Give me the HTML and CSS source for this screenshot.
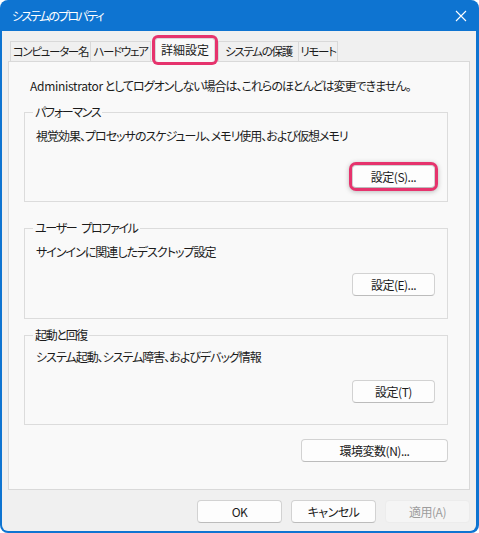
FILE: index.html
```html
<!DOCTYPE html>
<html lang="ja">
<head>
    <meta charset="UTF-8">
    <meta name="viewport" content="width=device-width, initial-scale=1.0">
    <title>システムのプロパティ</title>
    <link rel="stylesheet" href="styles.css">
</head>
<body>
    <div class="window">
        <div class="titlebar">
            <span class="title">システムのプロパティ</span>
            <svg class="close" width="12" height="12" viewBox="0 0 12 12">
                <path d="M1 1 L11 11 M11 1 L1 11" stroke="#fff" stroke-width="1.1" fill="none"/>
            </svg>
        </div>

        <div class="dialog">
            <div class="tabs">
                <div class="tab tab-name">コンピューター名</div>
                <div class="tab tab-hw">ハードウェア</div>
                <div class="tab active">詳細設定</div>
                <div class="tab tab-protect">システムの保護</div>
                <div class="tab tab-remote">リモート</div>
            </div>

            <div class="panel">
                <p class="note"><span class="latin">Administrator</span> としてログオンしない場合は、これらのほとんどは変更できません。</p>

                <fieldset class="group group-perf">
                    <legend>パフォーマンス</legend>
                    <p class="desc">視覚効果、プロセッサのスケジュール、メモリ使用、および仮想メモリ</p>
                    <div class="actions">
                        <button class="btn marked">設定(S)...</button>
                    </div>
                </fieldset>

                <fieldset class="group group-profile">
                    <legend>ユーザー&ensp;プロファイル</legend>
                    <p class="desc">サインインに関連したデスクトップ設定</p>
                    <div class="actions">
                        <button class="btn">設定(E)...</button>
                    </div>
                </fieldset>

                <fieldset class="group group-startup">
                    <legend>起動と回復</legend>
                    <p class="desc">システム起動、システム障害、およびデバッグ情報</p>
                    <div class="actions">
                        <button class="btn">設定(T)</button>
                    </div>
                </fieldset>

                <div class="env-row">
                    <button class="btn btn-wide">環境変数(N)...</button>
                </div>
            </div>

            <div class="footer">
                <button class="btn btn-footer">OK</button>
                <button class="btn btn-footer">キャンセル</button>
                <button class="btn btn-footer" disabled>適用(A)</button>
            </div>
        </div>
    </div>
</body>
</html>
```

FILE: styles.css
```css
body {
    margin: 0;
    background-color: #fff;
    font-family: "Noto Sans CJK JP", "Noto Sans", sans-serif;
    font-size: 12px;
    font-feature-settings: "palt";
    letter-spacing: -1px;
    color: #1b1b1b;
}
.latin {
    letter-spacing: -0.3px;
}
.window {
    width: 479px;
    height: 533px;
    box-sizing: border-box;
    background-color: #0e74d1;
    border-radius: 8px;
    padding: 0 3px 2px 2px;
    display: flex;
    flex-direction: column;
}
.titlebar {
    height: 31px;
    flex: none;
    display: flex;
    align-items: center;
    justify-content: space-between;
    padding: 0 9px 0 10px;
    color: #fff;
}
.title {
    line-height: 16px;
    letter-spacing: -1.8px;
}
.close {
    display: block;
}
.dialog {
    flex: 1;
    background-color: #f0f0f0;
    border-radius: 0 0 6px 6px;
    padding: 7px 6px 0 6px;
    display: flex;
    flex-direction: column;
}
.tabs {
    height: 23px;
    display: flex;
    align-items: flex-end;
    padding-left: 2px;
    position: relative;
    z-index: 1;
}
.tab {
    height: 20px;
    line-height: 19px;
    box-sizing: border-box;
    border: 1px solid #d9d9d9;
    border-bottom: none;
    margin-right: -1px;
    background-color: #f0f0f0;
    white-space: nowrap;
    text-align: center;
    font-size: 11.5px;
    letter-spacing: -1.3px;
}
.tab-name {
    width: 81px;
}
.tab-hw {
    width: 61px;
}
.tab-protect {
    width: 81px;
}
.tab-remote {
    width: 40px;
}
.tab.active {
    width: 60px;
    height: 24px;
    line-height: 22px;
    margin: 0 3px -1px 5px;
    background-color: #f9f9f9;
    border-radius: 3px;
    font-size: 12px;
    letter-spacing: 0;
    box-shadow: 0 0 0 3px #e6336d;
}
.panel {
    height: 429px;
    box-sizing: border-box;
    border: 1px solid #d9d9d9;
    background-color: #f9f9f9;
    padding: 16px 21px 0 15px;
}
.note {
    margin: 0 0 0 6px;
    line-height: 16px;
    white-space: nowrap;
}
.group {
    margin: 10px 0 0;
    padding: 0 12px 22px 11px;
    border: 1px solid #dcdcdc;
    min-inline-size: 0;
}
.group legend {
    margin-left: -3px;
    padding: 0 2px;
    line-height: 16px;
    letter-spacing: -1.3px;
}
.desc {
    margin: 8px 0 0;
    line-height: 16px;
    white-space: nowrap;
}
.actions {
    display: flex;
    justify-content: flex-end;
    margin-top: 13px;
}
.group-perf {
    padding-bottom: 13px;
}
.group-perf .actions {
    margin-top: 21px;
}
.group-profile {
    margin-top: 18px;
}
.group-startup {
    margin-top: 8px;
    padding-bottom: 21px;
}
.group-startup .desc {
    margin-top: 6px;
}
.group-startup .actions {
    margin-top: 15px;
}
.btn {
    width: 83px;
    height: 23px;
    padding: 0;
    box-sizing: border-box;
    border: 1px solid #d2d2d2;
    border-bottom-color: #bcbcbc;
    border-radius: 4px;
    background-color: #fdfdfd;
    font: inherit;
    font-feature-settings: "palt";
    letter-spacing: -0.5px;
    color: #1b1b1b;
}
.btn.marked {
    box-shadow: 0 0 0 3px #e6336d, 0 1px 5px 3px rgba(0, 0, 0, 0.25);
}
.env-row {
    display: flex;
    justify-content: flex-end;
    margin-top: 14px;
}
.btn-wide {
    width: 147px;
}
.footer {
    display: flex;
    justify-content: flex-end;
    gap: 9px;
    padding-top: 10px;
}
.btn-footer {
    width: 85px;
}
.btn-footer:disabled {
    background-color: #f5f5f5;
    border-color: #ececec;
    color: #9d9d9d;
}
```
